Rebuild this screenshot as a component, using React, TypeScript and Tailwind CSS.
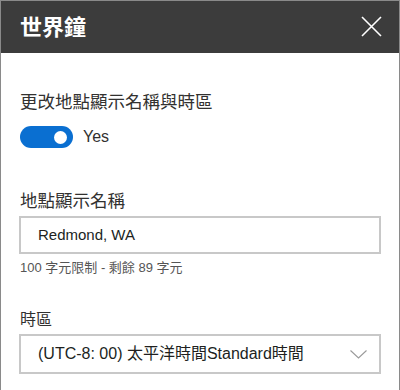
const font = { fontFamily: '"Liberation Sans", "Noto Sans CJK TC", sans-serif' };

export default function App() {
  return (
    <div
      className="h-[390px] w-[400px] overflow-hidden border border-b-0 border-[#8a8a8a] bg-white text-[#323130]"
      style={font}
    >
      {/* header */}
      <div className="flex h-[52px] items-center justify-between bg-[#3c3c3c] pl-[19px] pr-[17px]">
        <h1 className="text-[22px] font-bold text-white">世界鐘</h1>
        <svg width="21" height="21" viewBox="0 0 21 21" className="mt-[-2px]">
          <path d="M1 1 L20 20 M20 1 L1 20" stroke="white" strokeWidth="1.6" fill="none" />
        </svg>
      </div>

      <div className="flex flex-col px-[18px] pt-[37px]">
        <div className="pl-[1px] text-[17.5px] leading-[24px]">更改地點顯示名稱與時區</div>
        <div className="mt-[11px] flex items-center gap-[10px] pl-[1px]">
          <div className="flex h-[22px] w-[53px] items-center justify-end rounded-full bg-[#0a6fd1] pr-[6px]">
            <div className="h-[13px] w-[13px] rounded-full bg-white" />
          </div>
          <span className="text-[16px]">Yes</span>
        </div>

        <div className="mt-[40px] pl-[1px] text-[17.5px] leading-[24px]">地點顯示名稱</div>
        <div className="mt-[3px] flex h-[38px] items-center border-2 border-[#c8c8c8] pl-[17px] text-[15px] text-[#201f1e]">
          Redmond, WA
        </div>
        <div className="mt-[6px] pl-[1px] text-[13px] leading-[16px] text-[#555]">100 字元限制 - 剩餘 89 字元</div>

        <div className="mt-[33px] pl-[1px] text-[16px] leading-[22px]">時區</div>
        <div className="mt-[3px] flex h-[40px] items-center justify-between border-2 border-[#c8c8c8] pl-[17px] pr-[12px] text-[16px] text-[#201f1e]">
          <span>(UTC-8: 00) 太平洋時間Standard時間</span>
          <svg width="17" height="9" viewBox="0 0 17 9">
            <path d="M0.5 0.5 L8.5 8 L16.5 0.5" stroke="#9a9a9a" strokeWidth="1.1" fill="none" />
          </svg>
        </div>
      </div>
    </div>
  );
}
